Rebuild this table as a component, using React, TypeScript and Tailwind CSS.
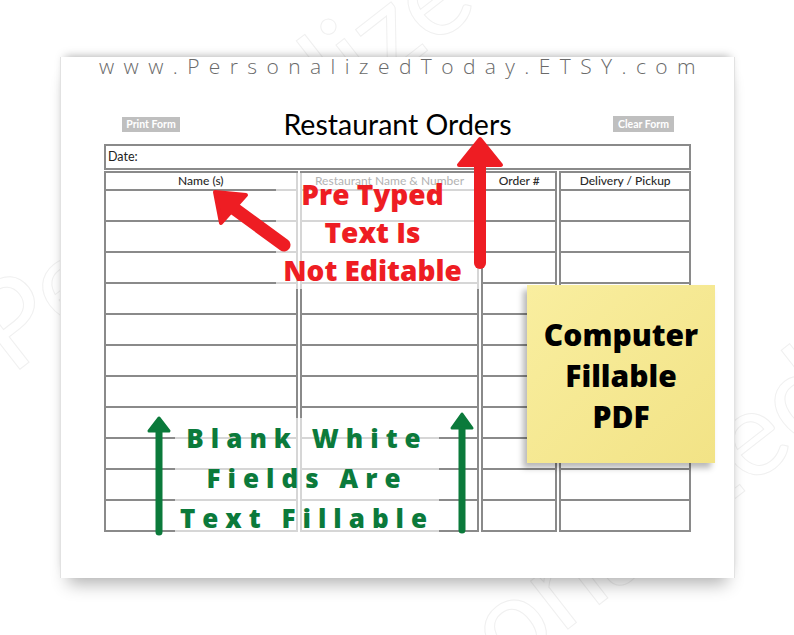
import React from 'react';

// column widths of the order table, in px (gap of 2px between)
const columns = [
  { label: 'Name (s)', w: 'w-[194px]' },
  { label: 'Restaurant Name & Number', w: 'w-[180px]' },
  { label: 'Order #', w: 'w-[76px]' },
  { label: 'Delivery / Pickup', w: 'w-[132px]' },
];

const ROWS = 11;

const Watermark = () => (
  <div aria-hidden="true" className="absolute inset-0 overflow-hidden pointer-events-none select-none">
    <div className="absolute left-[-120px] top-[330px] -rotate-[38deg] origin-left text-[120px] font-[Lato,sans-serif] text-transparent [-webkit-text-stroke:1px_#f0f0f0] whitespace-nowrap">
      © PersonalizedToday
    </div>
    <div className="absolute left-[300px] top-[690px] -rotate-[38deg] origin-left text-[120px] font-[Lato,sans-serif] text-transparent [-webkit-text-stroke:1px_#f0f0f0] whitespace-nowrap">
      PersonalizedToday
    </div>
  </div>
);

const Arrows = () => (
  <svg className="absolute left-0 top-0 pointer-events-none" width="794" height="635" viewBox="0 0 794 635">
    {/* red arrows */}
    <g fill="#ee1d23" stroke="#ee1d23" strokeLinejoin="round" strokeLinecap="round">
      <line x1="284" y1="245" x2="232" y2="207" strokeWidth="13" />
      <polygon points="215,192 246,195 221,223" strokeWidth="4" />
      <line x1="480" y1="263" x2="480" y2="162" strokeWidth="12" />
      <polygon points="480,139 501,165 459,165" strokeWidth="4" />
    </g>
    {/* green arrows */}
    <g fill="#0b7a3b" stroke="#0b7a3b" strokeLinejoin="round" strokeLinecap="round">
      <line x1="159" y1="532" x2="159" y2="428" strokeWidth="7" />
      <polygon points="159,418 169,431 149,431" strokeWidth="3" />
      <line x1="462" y1="530" x2="462" y2="425" strokeWidth="7" />
      <polygon points="462,414 472,428 452,428" strokeWidth="3" />
    </g>
  </svg>
);

export default function App() {
  return (
    <div className="relative w-[794px] h-[635px] bg-white overflow-hidden font-[Lato,'Liberation_Sans',sans-serif]">
      <Watermark />

      {/* the form page */}
      <div className="relative ml-[60px] mt-[57px] w-[675px] h-[521px] bg-white border-x border-[#e2e2e2] shadow-[0_-5px_9px_-5px_rgba(0,0,0,0.35),0_14px_16px_-8px_rgba(0,0,0,0.3)]">
        <div className="h-[20px] pl-[9px] text-center text-[21px] leading-[18px] tracking-[9.4px] text-[#6a6a6a] font-['Open_Sans',sans-serif] font-light whitespace-nowrap">
          www.PersonalizedToday.ETSY.com
        </div>

        <div className="px-[43px]">
          <div className="mt-[33px] h-[28px] grid grid-cols-[1fr_auto_1fr] items-center">
            <div className="ml-[18px] w-[58px] h-[15px] bg-[#bfbfbf] text-white text-[10.5px] font-bold leading-[15px] text-center">
              Print Form
            </div>
            <div className="text-[28.5px] leading-[28px] text-black">Restaurant Orders</div>
            <div className="justify-self-end mr-[17px] w-[61px] h-[16px] bg-[#bfbfbf] text-white text-[10.5px] font-bold leading-[16px] text-center">
              Clear Form
            </div>
          </div>

          <div className="mt-[6px] h-[26px] border-2 border-[#8a8a8a] px-[2px] pt-[2px] text-[12.5px] leading-[17px] text-[#222]">
            Date:
          </div>

          <div className="mt-[1px] flex gap-[2px]">
            {columns.map((c) => (
              <div key={c.label} className={`${c.w} flex flex-col`}>
                <div className="h-[20px] border-2 border-[#8a8a8a] text-center text-[12px] font-medium leading-[16px] text-[#2a2a2a] whitespace-nowrap">
                  {c.label}
                </div>
                <div className="border-x-2 border-[#8a8a8a]">
                  {Array.from({ length: ROWS }).map((_, i) => (
                    <div key={i} className="h-[31px] border-b-2 border-[#8a8a8a]" />
                  ))}
                </div>
              </div>
            ))}
          </div>
        </div>
      </div>

      {/* annotation: pre typed text */}
      <div className="absolute left-[276px] top-[173px] w-[203px] h-[116px] bg-white/65 flex flex-col items-center pt-[2px] pr-[10px] font-['Open_Sans',sans-serif] font-extrabold text-[28px] leading-[38px] text-[#ee1d23] whitespace-nowrap">
        <div>Pre Typed</div>
        <div>Text Is</div>
        <div>Not Editable</div>
      </div>

      {/* annotation: fillable fields */}
      <div className="absolute left-[175px] top-[418px] w-[264px] h-[116px] bg-white/65 flex flex-col items-center font-['Open_Sans',sans-serif] font-extrabold text-[26px] leading-[40px] tracking-[7px] text-[#0b7a3b] whitespace-nowrap">
        <div>Blank White</div>
        <div>Fields Are</div>
        <div>Text Fillable</div>
      </div>

      {/* sticky note */}
      <div className="absolute left-[527px] top-[285px] w-[188px] h-[178px] bg-gradient-to-br from-[#f9ee9f] to-[#f2e386] shadow-[-4px_5px_6px_rgba(0,0,0,0.28)] flex flex-col items-center justify-center pt-[2px] font-['Open_Sans',sans-serif] font-extrabold text-[30px] leading-[41px] text-black">
        <div>Computer</div>
        <div>Fillable</div>
        <div>PDF</div>
      </div>

      <Arrows />
    </div>
  );
}
